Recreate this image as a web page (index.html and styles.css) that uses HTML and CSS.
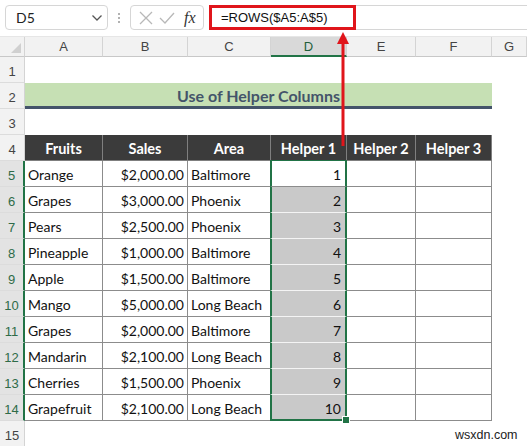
FILE: index.html
```html
<!DOCTYPE html>
<html>
<head>
<meta charset="utf-8">
<link rel="stylesheet" href="styles.css">
</head>
<body>
<div class="app">
  <div class="toolbar">
    <div class="namebox"><span class="name">D5</span>
      <svg class="chev" width="12" height="8" viewBox="0 0 12 8"><path d="M1.5 1.5 L6 6 L10.5 1.5" fill="none" stroke="#555" stroke-width="1.3"/></svg>
    </div>
    <div class="dots"><span></span><span></span><span></span></div>
    <div class="fxbox">
      <svg width="16" height="16" viewBox="0 0 16 16"><path d="M2 2 L14 14 M14 2 L2 14" stroke="#b8b8b8" stroke-width="1.3" fill="none"/></svg>
      <svg width="18" height="16" viewBox="0 0 18 16"><path d="M2 8 L7 13 L16 3" stroke="#b8b8b8" stroke-width="1.3" fill="none"/></svg>
      <span class="fx">fx</span>
    </div>
    <div class="formula"><div class="redbox">=ROWS($A5:A$5)</div></div>
  </div>
  <div class="sheet">
    <div class="corner"><span class="tri"></span></div>
    <div class="ch">A</div><div class="ch">B</div><div class="ch">C</div><div class="ch sel">D</div><div class="ch">E</div><div class="ch">F</div><div class="ch">G</div>

    <div class="rh">1</div><div class="blank span7"></div>
    <div class="rh">2</div><div class="title">Use of Helper Columns</div><div class="blank"></div>
    <div class="rh">3</div><div class="blank span7"></div>
    <div class="rh">4</div>
    <div class="hd">Fruits</div><div class="hd">Sales</div><div class="hd">Area</div><div class="hd">Helper 1</div><div class="hd">Helper 2</div><div class="hd">Helper 3</div><div class="blank"></div>

    <div class="rh rs">5</div><div class="c">Orange</div><div class="c r">$2,000.00</div><div class="c">Baltimore</div><div class="c r d act">1</div><div class="c"></div><div class="c"></div><div class="blank"></div>
    <div class="rh rs">6</div><div class="c">Grapes</div><div class="c r">$3,000.00</div><div class="c">Phoenix</div><div class="c r d g">2</div><div class="c"></div><div class="c"></div><div class="blank"></div>
    <div class="rh rs">7</div><div class="c">Pears</div><div class="c r">$2,500.00</div><div class="c">Phoenix</div><div class="c r d g">3</div><div class="c"></div><div class="c"></div><div class="blank"></div>
    <div class="rh rs">8</div><div class="c">Pineapple</div><div class="c r">$1,000.00</div><div class="c">Baltimore</div><div class="c r d g">4</div><div class="c"></div><div class="c"></div><div class="blank"></div>
    <div class="rh rs">9</div><div class="c">Apple</div><div class="c r">$1,500.00</div><div class="c">Baltimore</div><div class="c r d g">5</div><div class="c"></div><div class="c"></div><div class="blank"></div>
    <div class="rh rs">10</div><div class="c">Mango</div><div class="c r">$5,000.00</div><div class="c">Long Beach</div><div class="c r d g">6</div><div class="c"></div><div class="c"></div><div class="blank"></div>
    <div class="rh rs">11</div><div class="c">Grapes</div><div class="c r">$2,000.00</div><div class="c">Baltimore</div><div class="c r d g">7</div><div class="c"></div><div class="c"></div><div class="blank"></div>
    <div class="rh rs">12</div><div class="c">Mandarin</div><div class="c r">$2,100.00</div><div class="c">Long Beach</div><div class="c r d g">8</div><div class="c"></div><div class="c"></div><div class="blank"></div>
    <div class="rh rs">13</div><div class="c">Cherries</div><div class="c r">$1,500.00</div><div class="c">Phoenix</div><div class="c r d g">9</div><div class="c"></div><div class="c"></div><div class="blank"></div>
    <div class="rh rs">14</div><div class="c">Grapefruit</div><div class="c r">$2,100.00</div><div class="c">Long Beach</div><div class="c r d g last">10<span class="handle"></span></div><div class="c"></div><div class="c"></div><div class="blank"></div>
    <div class="rh">15</div><div class="blank span7"></div>
  </div>
  <svg class="arrow" width="14" height="118" viewBox="0 0 14 118"><path d="M7 12 L7 115" stroke="#e0151b" stroke-width="3"/><path d="M1 13 L7 1 L13 13 Z" fill="#e0151b"/></svg>
  <div class="wm">wsxdn.com</div>
</div>
</body>
</html>
```

FILE: styles.css
```css
html, body { margin: 0; padding: 0; background: #fff; }
body { width: 527px; height: 446px; overflow: hidden; font-family: "Lato", "Liberation Sans", sans-serif; }
.app { position: relative; width: 527px; height: 446px; }
.toolbar { height: 37px; display: flex; align-items: flex-start; padding-top: 5px; box-sizing: border-box; background: #fff; border-bottom: 1px solid #e6e6e6; }
.namebox { margin-left: 5px; width: 103px; height: 25px; box-sizing: border-box; border: 1px solid #d6d6d6; border-radius: 4px; display: flex; align-items: center; justify-content: space-between; padding: 0 4px 0 10px; }
.name { font-size: 14px; color: #222; }
.dots { width: 22px; height: 25px; display: flex; flex-direction: column; align-items: center; justify-content: center; gap: 2px; }
.dots span { width: 2px; height: 2px; background: #999; border-radius: 1px; }
.fxbox { width: 74px; height: 25px; box-sizing: border-box; border: 1px solid #d6d6d6; border-radius: 4px; display: flex; align-items: center; padding-left: 7px; gap: 4px; }
.fx { font-family: "Liberation Serif", serif; font-style: italic; font-size: 16px; color: #333; margin-left: 4px; }
.formula { margin-left: 5px; flex: 1; height: 25px; border-top: 1px solid #d6d6d6; border-bottom: 1px solid #d6d6d6; box-sizing: border-box; position: relative; }
.redbox { position: absolute; left: 0; top: -1px; width: 147px; height: 25px; box-sizing: border-box; border: 3px solid #e0151b; font-size: 13px; line-height: 19px; padding-left: 9px; color: #111; font-family: "Liberation Sans", sans-serif; }
.sheet { display: grid; grid-template-columns: 25px 78px 85px 83px 76px 69px 76px 35px; grid-template-rows: 20px repeat(15, 26px); }
.corner { background: #f2f2f2; border-right: 1px solid #d4d4d4; border-bottom: 1px solid #c8c8c8; box-sizing: border-box; position: relative; }
.tri { position: absolute; right: 3px; bottom: 3px; width: 0; height: 0; border-left: 10px solid transparent; border-bottom: 10px solid #d0d0d0; }
.ch { background: #f2f2f2; border-right: 1px solid #d4d4d4; border-bottom: 1px solid #c8c8c8; box-sizing: border-box; font-size: 13px; color: #444; display: flex; align-items: center; justify-content: center; font-family: "Liberation Sans", sans-serif; }
.ch.sel { background: #d9d9d9; border-bottom: 2px solid #217346; color: #1f5e3a; }
.rh { background: #f2f2f2; border-right: 1px solid #d4d4d4; border-bottom: 1px solid #dcdcdc; box-sizing: border-box; font-size: 13px; color: #444; display: flex; align-items: flex-end; justify-content: center; padding-bottom: 3px; font-family: "Liberation Sans", sans-serif; }
.rh.rs { background: #e3e3e3; color: #2e6b48; border-right: 2px solid #217346; }
.blank { background: #fff; }
.span7 { grid-column: span 7; }
.title { grid-column: span 6; background: #c6e0b4; border-bottom: 3px solid #44546a; box-sizing: border-box; color: #44546a; font-weight: 700; font-size: 16px; display: flex; align-items: center; justify-content: center; padding-top: 1px; }
.hd { background: #3b3b3b; color: #fff; font-weight: 700; font-size: 14.5px; display: flex; align-items: center; justify-content: center; border-right: 1px solid #7f7f7f; border-bottom: 1px solid #7f7f7f; box-sizing: border-box; padding-top: 2px; }
.c { border-right: 1px solid #8c8c8c; border-bottom: 1px solid #8c8c8c; box-sizing: border-box; font-size: 14px; color: #111; display: flex; align-items: center; padding: 2px 3px 0 3px; white-space: nowrap; }
.c.r { justify-content: flex-end; }
.d { position: relative; border-left: 2px solid #217346; border-right: 2px solid #217346; margin-left: -1px; padding-right: 4px; }
.d.act { border-top: 1px solid #217346; margin-top: -1px; }
.d.g { background: #c9c9c9; border-bottom-color: #f4f4f4; }
.d.last { border-bottom: 2px solid #217346; }
.handle { position: absolute; right: -5px; bottom: -5px; width: 6px; height: 6px; background: #217346; border: 1px solid #fff; }
.arrow { position: absolute; left: 336px; top: 31px; }
.wm { position: absolute; left: 455px; top: 428px; font-size: 12.5px; color: #222; font-family: "Liberation Sans", sans-serif; }
```
